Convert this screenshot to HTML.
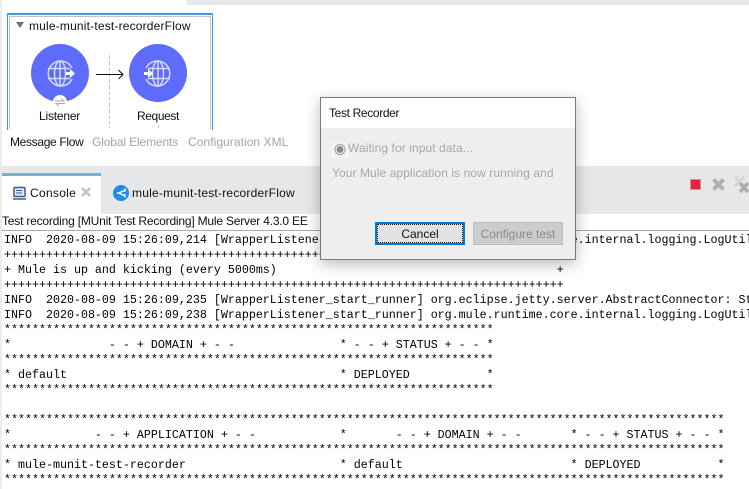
<!DOCTYPE html>
<html><head><meta charset="utf-8"><style>
html,body{margin:0;padding:0;background:#fff}
body{width:749px;height:489px;overflow:hidden;position:relative;font-family:"Liberation Sans",sans-serif;color:#111}
.a{position:absolute}
.t{position:absolute;white-space:pre;font-size:12px;line-height:15px}
.m{position:absolute;left:4px;width:745px;overflow:hidden;white-space:pre;font:11.67px/15px "Liberation Mono",monospace;color:#000}
</style></head><body>
<div class="a" style="left:0;top:0;width:2px;height:489px;background:#ececec"></div>
<div class="a" style="left:187px;top:0;width:562px;height:5px;background:#e6e7e9"></div>

<div class="a" style="left:7px;top:13px;width:204px;height:115px;border:1px solid #3a9be8;border-top-width:2px;border-bottom:0"></div>
<div class="a" style="left:9px;top:16px;width:200px;height:112px;border:1px solid #c4c4c4;border-bottom:0"></div>
<div class="a" style="left:16px;top:22px;width:0;height:0;border-left:4px solid transparent;border-right:4px solid transparent;border-top:6px solid #707070"></div>
<div class="t" style="left:29px;top:19px;letter-spacing:.18px">mule-munit-test-recorderFlow</div>

<svg class="a" style="left:0;top:0" width="220" height="128" viewBox="0 0 220 128">
<line x1="109.500" y1="55" x2="109.500" y2="128" stroke="#c8c8c8" stroke-dasharray="4 2"/>
<line x1="158.500" y1="125" x2="158.500" y2="128" stroke="#c8c8c8"/>
<circle cx="60" cy="73" r="29" fill="#5e6cfb"/>
<circle cx="158" cy="73" r="29" fill="#5e6cfb"/>
<g fill="none" stroke="#d6d9fb" stroke-width="1.500">
<path d="M72 68A12.500 12.500 0 1 0 72 79"/><ellipse cx="60" cy="73.500" rx="5.500" ry="12.500"/><path d="M48 68.500H70M48 78.500H70M60 61V86"/>
<path d="M146 68A12.500 12.500 0 1 1 146 79"/><ellipse cx="158" cy="73.500" rx="5.500" ry="12.500"/><path d="M148 68.500H170M148 78.500H170M158 61V86"/>
</g>
<path d="M66 72H70V69L75 73.500L70 78V75H66Z" fill="#fff"/>
<path d="M144 72H148V69L153 73.500L148 78V75H144Z" fill="#fff"/>
<circle cx="60" cy="102" r="7" fill="#fff"/>
<path d="M55 101H64L61 98.500M65 103.500H56L59 106" fill="none" stroke="#aaa"/>
<path d="M96 74.500H123M118.500 70L123 74.500L118.500 79" fill="none" stroke="#111"/>
</svg>
<div class="t" style="left:39px;top:109px;letter-spacing:-.2px">Listener</div>
<div class="t" style="left:137px;top:109px;letter-spacing:-.4px">Request</div>

<div class="t" style="left:10px;top:135px;letter-spacing:-.33px">Message Flow</div>
<div class="t" style="left:92px;top:135px;color:#a4a4a4;letter-spacing:-.13px">Global Elements</div>
<div class="t" style="left:188px;top:135px;color:#a4a4a4;letter-spacing:.06px">Configuration XML</div>

<div class="a" style="left:2px;top:166px;width:747px;height:48px;background:#e6e7e9"></div>
<div class="a" style="left:2px;top:173px;width:99px;height:41px;background:#fff;border-top:3px solid #6cb4de;box-sizing:border-box"></div>
<svg class="a" style="left:0;top:160px" width="130" height="54" viewBox="0 0 130 54">
<rect x="14" y="27.500" width="11" height="9" rx="1" fill="#dfe8f2" stroke="#3b5f8c" stroke-width="1.500"/>
<path d="M16 30.500H22M16 33H22" stroke="#3b5f8c"/><path d="M13 39H26" stroke="#3b5f8c" stroke-width="1.500"/>
<path d="M82 28L90 36M90 28L82 36" stroke="#c4c4c4" stroke-width="2.500"/>
<circle cx="121" cy="33" r="8" fill="#1f8ceb"/>
<path d="M125 28.500V31H123L119 33L123 35H125V37.500M117 33H119" fill="none" stroke="#fff" stroke-width="1.500"/>
</svg>
<div class="t" style="left:30px;top:186px;letter-spacing:.3px">Console</div>
<div class="t" style="left:132px;top:186px;letter-spacing:.22px">mule-munit-test-recorderFlow</div>
<svg class="a" style="left:685px;top:172px" width="64" height="26" viewBox="0 0 64 26">
<rect x="5.500" y="7.500" width="10" height="10" fill="#e8243a" stroke="#e9888f"/>
<path d="M28.500 7.500L38.500 17.500M38.500 7.500L28.500 17.500" stroke="#b0b0b0" stroke-width="4"/>
<path d="M50 5L59 14M59 5L50 14" stroke="#d4d4d4" stroke-width="3"/>
<path d="M55 11L63 20M63 11L55 20" stroke="#adadad" stroke-width="3.500"/>
</svg>

<div class="t" style="left:2px;top:214px;letter-spacing:-.2px">Test recording [MUnit Test Recording] Mule Server 4.3.0 EE</div>
<div class="a" style="left:2px;top:230px;width:747px;height:1px;background:#a9a9a9"></div>

<div class="m" style="top:233px">INFO  2020-08-09 15:26:09,214 [WrapperListener_start_runner] org.mule.runtime.core.internal.logging.LogUtil</div>
<div class="m" style="top:248px">++++++++++++++++++++++++++++++++++++++++++++++++++++++++++++++++++++++++++++++++</div>
<div class="m" style="top:263px">+ Mule is up and kicking (every 5000ms)                                        +</div>
<div class="m" style="top:278px">++++++++++++++++++++++++++++++++++++++++++++++++++++++++++++++++++++++++++++++++</div>
<div class="m" style="top:293px">INFO  2020-08-09 15:26:09,235 [WrapperListener_start_runner] org.eclipse.jetty.server.AbstractConnector: Started</div>
<div class="m" style="top:308px">INFO  2020-08-09 15:26:09,238 [WrapperListener_start_runner] org.mule.runtime.core.internal.logging.LogUtil</div>
<div class="m" style="top:323px">**********************************************************************</div>
<div class="m" style="top:338px">*              - - + DOMAIN + - -               * - - + STATUS + - - *</div>
<div class="m" style="top:353px">**********************************************************************</div>
<div class="m" style="top:368px">* default                                       * DEPLOYED           *</div>
<div class="m" style="top:383px">**********************************************************************</div>
<div class="m" style="top:413px">*******************************************************************************************************</div>
<div class="m" style="top:428px">*            - - + APPLICATION + - -            *       - - + DOMAIN + - -       * - - + STATUS + - - *</div>
<div class="m" style="top:443px">*******************************************************************************************************</div>
<div class="m" style="top:458px">* mule-munit-test-recorder                      * default                        * DEPLOYED           *</div>
<div class="m" style="top:473px">*******************************************************************************************************</div>

<div class="a" style="left:320px;top:97px;width:256px;height:163px;box-sizing:border-box;background:#eee;border:1px solid #7a7a7a;box-shadow:0 4px 14px rgba(0,0,0,.28)">
<div class="a" style="left:0;top:0;width:254px;height:30px;background:#fff"></div>
<div class="t" style="left:8px;top:8px;color:#111;letter-spacing:-.35px">Test Recorder</div>
<svg class="a" style="left:11px;top:44px" width="16" height="16" viewBox="0 0 16 16"><rect width="16" height="16" fill="#f3f3f3"/><circle cx="8" cy="7.500" r="5" fill="#fff" stroke="#999"/><circle cx="8" cy="7.500" r="3.500" fill="#8a8a8a"/></svg>
<div class="t" style="left:27px;top:43px;color:#a8a8a8;letter-spacing:.08px">Waiting for input data...</div>
<div class="t" style="left:11px;top:68px;color:#a8a8a8;letter-spacing:.08px">Your Mule application is now running and</div>
<div class="a" style="left:54px;top:124px;width:90px;height:23px;box-sizing:border-box;background:#e1e1e1;border:2px solid #0078d7;outline:1px dotted #111;outline-offset:-3px"></div>
<div class="t" style="left:54px;top:129px;width:90px;text-align:center;color:#111">Cancel</div>
<div class="a" style="left:152px;top:124px;width:90px;height:23px;box-sizing:border-box;background:#ccc;border:1px solid #bfbfbf"></div>
<div class="t" style="left:152px;top:129px;width:90px;text-align:center;color:#8a8a8a">Configure test</div>
</div>
</body></html>
